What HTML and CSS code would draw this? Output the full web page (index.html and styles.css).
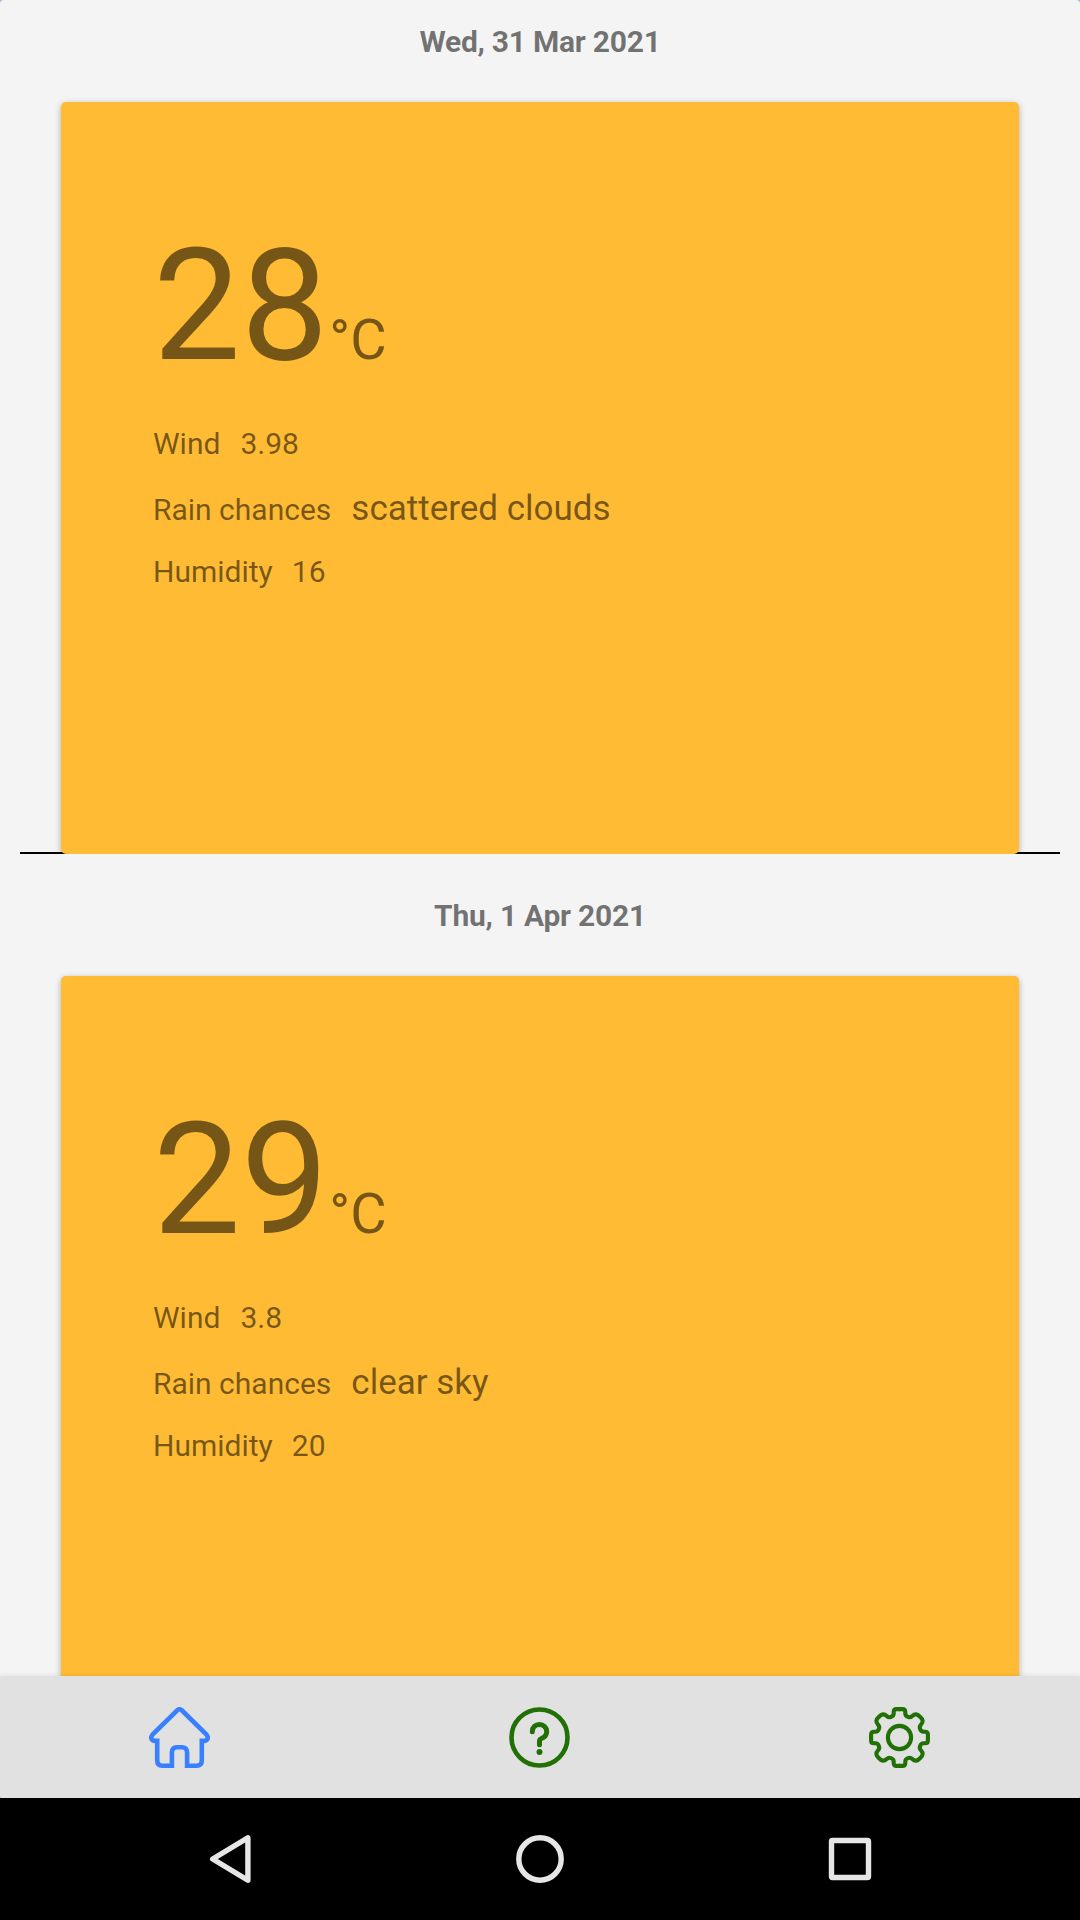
FILE: index.html
```html
<!DOCTYPE html>
<html lang="en">
<head>
<meta charset="utf-8">
<title>Forecast</title>
<link rel="stylesheet" href="styles.css">
</head>
<body>
<div class="screen">
  <div class="app">
    <main class="forecast">
      <section class="day">
        <h2 class="date">Wed, 31 Mar 2021</h2>
        <article class="card">
          <div class="temperature"><span class="degrees">28</span><span class="unit">°C</span></div>
          <div class="row"><span>Wind</span><span>3.98</span></div>
          <div class="row sky"><span>Rain chances</span><span class="large">scattered clouds</span></div>
          <div class="row humidity"><span>Humidity</span><span>16</span></div>
        </article>
      </section>
      <section class="day">
        <h2 class="date">Thu, 1 Apr 2021</h2>
        <article class="card">
          <div class="temperature"><span class="degrees">29</span><span class="unit">°C</span></div>
          <div class="row"><span>Wind</span><span>3.8</span></div>
          <div class="row sky"><span>Rain chances</span><span class="large">clear sky</span></div>
          <div class="row humidity"><span>Humidity</span><span>20</span></div>
        </article>
      </section>
    </main>
    <nav class="tabs">
      <a class="tab active">
        <svg viewBox="-30.5 -30.5 61 61"><path d="M2 -27.5 L27 -2.8 C29.5 0 28 3.4 24.5 3.4 H22.3 V23 Q22.3 28.2 17 28.2 H7.6 V15 Q7.6 9.7 2.5 9.7 H-2.5 Q-7.6 9.7 -7.6 15 V28.2 H-17 Q-22.3 28.2 -22.3 23 V3.4 H-24.5 C-28 3.4 -29.5 0 -27 -2.8 L-2 -27.5 Q0 -29 2 -27.5Z"/></svg>
      </a>
      <a class="tab">
        <svg viewBox="-30.5 -30.5 61 61"><circle r="28"/><path class="mark" d="M-7.2 -5.8 C-7.2 -10.3 -4 -13 0 -13 C4 -13 7.2 -9.8 7.2 -6 C7.2 -2.5 5.3 -.5 2.5 .8 Q0 1.8 0 3.5 V7.2"/><circle class="dot" cy="14.5" r="3"/></svg>
      </a>
      <a class="tab">
        <svg viewBox="-30.5 -30.5 61 61" class="gear">
          <defs><path id="teeth" d="M0 -28.4 H3 Q5.8 -28.4 5.8 -25.5 V-24 Q5.8 -21.6 8.5 -20.6 Q10.8 -19.6 12.8 -21.5 Q16.7 -25.2 20.6 -20.6 Q25.2 -16.7 21.5 -12.8 Q19.6 -10.8 20.6 -8.5 Q21.6 -5.8 24 -5.8 H25.5 Q28.4 -5.8 28.4 -3 V0"/></defs>
          <use href="#teeth"/><use href="#teeth" transform="rotate(90)"/><use href="#teeth" transform="rotate(180)"/><use href="#teeth" transform="rotate(270)"/>
          <circle r="11.6"/>
        </svg>
      </a>
    </nav>
  </div>
  <div class="system-bar">
    <svg viewBox="0 0 48 48"><path d="M41.9 2.8 V45.2 L6.7 24Z"/></svg>
    <svg viewBox="0 0 48 48"><circle cx="24" cy="24" r="21.2"/></svg>
    <svg viewBox="0 0 48 48"><rect x="5.5" y="5.5" width="37" height="37" rx="1"/></svg>
  </div>
</div>
</body>
</html>
```
FILE: styles.css
```css
body {
  margin: 0;
  font-family: Roboto, sans-serif;
  color: rgba(0, 0, 0, 0.54);
}

.screen {
  display: flex;
  flex-direction: column;
  width: 1080px;
  height: 1920px;
  background: #a9b8e2;
  overflow: hidden;
}

.app {
  display: flex;
  flex-direction: column;
  height: 1798px;
  border-radius: 4px 4px 3px 3px;
  background: #f4f4f4;
  overflow: hidden;
}

.forecast {
  display: flex;
  flex-direction: column;
  gap: 20px;
  flex: 1;
  min-height: 0;
  padding: 0 20px;
  overflow: hidden;
}

.day {
  flex: none;
  height: 854px;
  overflow: hidden;
  background: linear-gradient(#000, #000) bottom / 100% 2px no-repeat;
}

.date {
  margin: 0;
  padding: 22px 0 40px;
  font-size: 30px;
  line-height: 40px;
  font-weight: 700;
  letter-spacing: -0.25px;
  text-align: center;
}

.card {
  box-sizing: border-box;
  display: flex;
  flex-direction: column;
  gap: 25px;
  height: 752px;
  margin: 0 41px;
  padding: 124px 92px 0;
  border-radius: 5px;
  background: #ffbb33;
  box-shadow: 0 2px 6px rgba(0, 0, 0, 0.3);
}

.temperature {
  display: flex;
  align-items: baseline;
  gap: 1px;
  height: 160px;
  margin-bottom: 15px;
  line-height: 160px;
}

.degrees {
  font-size: 156px;
}

.unit {
  font-size: 56px;
}

.row {
  display: flex;
  align-items: baseline;
  gap: 20px;
  height: 36px;
  font-size: 30px;
  line-height: 36px;
}

.sky {
  height: 41px;
  padding-top: 1px;
}

.humidity {
  gap: 19px;
}

.large {
  font-size: 35px;
  line-height: 42px;
}

.tabs {
  display: flex;
  align-items: center;
  height: 122px;
  background: #e1e1e1;
  box-shadow: 0 0 5px rgba(0, 0, 0, 0.1);
  z-index: 1;
}

.tab {
  box-sizing: border-box;
  display: flex;
  flex: 1;
  justify-content: center;
  padding-right: 1px;
  color: #217005;
}

.active {
  color: #3880ff;
}

.tab svg {
  width: 61px;
  height: 61px;
  fill: none;
  stroke: currentColor;
  stroke-width: 4.6;
  stroke-linecap: round;
}

.tab .gear {
  stroke-width: 4.1;
}

.tab .mark {
  stroke-width: 5;
}

.tab .dot {
  fill: currentColor;
  stroke: none;
}

.system-bar {
  display: flex;
  align-items: center;
  justify-content: space-between;
  height: 122px;
  padding: 0 206px;
  background: #000;
}

.system-bar svg {
  width: 48px;
  height: 48px;
  fill: none;
  stroke: #e6e6e6;
  stroke-width: 5.4;
  stroke-linejoin: round;
}
```
